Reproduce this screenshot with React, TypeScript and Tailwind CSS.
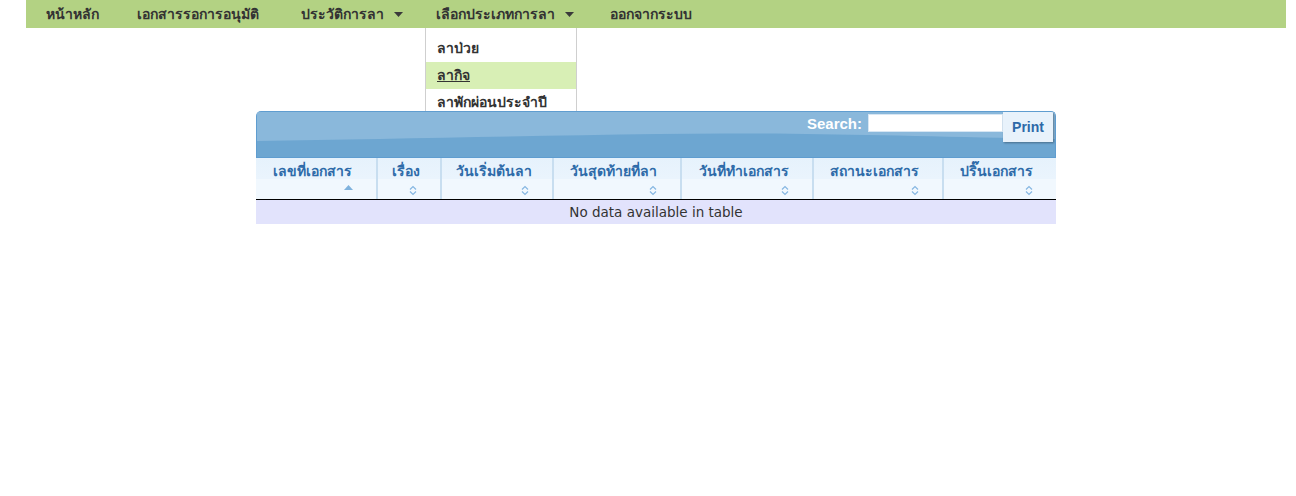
import React from "react"

const navItems = [
  { label: "หน้าหลัก", w: "w-[91px]" },
  { label: "เอกสารรอการอนุมัติ", w: "w-[164px]" },
  { label: "ประวัติการลา", w: "w-[135px]", caret: true },
  { label: "เลือกประเภทการลา", w: "w-[174px]", caret: true, open: true },
  { label: "ออกจากระบบ", w: "w-[120px]" },
]

const leaveTypes = ["ลาป่วย", "ลากิจ", "ลาพักผ่อนประจำปี"]

const columns = [
  { label: "เลขที่เอกสาร", w: "w-[120px]", sorted: true },
  { label: "เรื่อง", w: "w-[64px]" },
  { label: "วันเริ่มต้นลา", w: "w-[112px]" },
  { label: "วันสุดท้ายที่ลา", w: "w-[128px]" },
  { label: "วันที่ทำเอกสาร", w: "w-[132px]" },
  { label: "สถานะเอกสาร", w: "w-[130px]" },
  { label: "ปริ๊นเอกสาร", w: "flex-1" },
]

const Caret = () => (
  <svg width="9" height="5" viewBox="0 0 9 5" className="ml-[10px] mt-[1px]">
    <path d="M0 0h9L4.5 5z" fill="#3a3a3a" />
  </svg>
)

const SortIcon = ({ asc }: { asc?: boolean }) =>
  asc ? (
    <svg width="9" height="5" viewBox="0 0 9 5">
      <path d="M0 5h9L4.5 0z" fill="#7fb2dd" />
    </svg>
  ) : (
    <svg width="8" height="11" viewBox="0 0 8 11">
      <path d="M1 4.5L4 1.5l3 3M1 6.5l3 3 3-3" fill="none" stroke="#86b7e2" strokeWidth="1.2" />
    </svg>
  )

const LeaveList = () => {
  return (
    <div className="min-h-[496px] bg-white font-['Tahoma','DejaVu_Sans',sans-serif]">
      <div className="relative z-10 ml-[26px] mr-[10px] h-[28px] bg-[#b3d283]">
        <ul className="flex h-full pl-[9px]">
          {navItems.map((item) => (
            <li key={item.label} className={`relative flex h-full items-center px-[11px] ${item.w}`}>
              <span className="whitespace-nowrap text-[14px] font-bold text-[#333]">{item.label}</span>
              {item.caret && <Caret />}
              {item.open && (
                <div className="absolute left-0 top-[28px] w-[152px] border border-t-0 border-[#cfcfcf] bg-white pt-[7px]">
                  {leaveTypes.map((t, i) => (
                    <div
                      key={t}
                      className={`flex h-[27px] items-center px-[11px] text-[14px] font-bold text-[#333] ${
                        i === 1 ? "bg-[#d8efb5] underline" : ""
                      }`}
                    >
                      {t}
                    </div>
                  ))}
                </div>
              )}
            </li>
          ))}
        </ul>
      </div>

      <div className="relative z-20 ml-[256px] mt-[83px] w-[800px]">
        <div className="relative h-[46px] overflow-hidden rounded-t-[5px] border border-b-0 border-[#5f9dd0]">
          <svg className="absolute inset-0" width="800" height="46" preserveAspectRatio="none" viewBox="0 0 800 46">
            <rect width="800" height="46" fill="#6da6d1" />
            <path d="M0 0H800V27C640 24 520 20 400 22C260 24 120 27 0 29Z" fill="#8ab8db" />
          </svg>
          <div className="relative flex items-start justify-end">
            <span className="mt-[1px] text-[15px] font-bold text-white font-['Liberation_Sans',sans-serif]">Search:</span>
            <input className="ml-[6px] mt-[2px] h-[18px] w-[135px] border border-[#d7e6f3] bg-white" />
            <button className="h-[30px] w-[50px] bg-[#e8f2fb] text-[14px] font-bold text-[#2d69a8] shadow-[1px_1px_2px_rgba(0,0,0,0.35)] font-['Liberation_Sans',sans-serif]">
              Print
            </button>
            <div className="w-[2px]" />
          </div>
        </div>

        <div className="flex h-[43px] border-b border-t border-black border-t-[#5f9dd0] bg-[linear-gradient(#e6f2fc_0%,#eaf4fd_50%,#f1f8fe_50%,#f1f8fe_100%)]">
          {columns.map((c, i) => (
            <div
              key={c.label}
              className={`flex flex-col pt-[3px] ${c.w} ${i > 0 ? "border-l-2 border-[#c8def0]" : ""}`}
            >
              <span className="pr-[7px] text-center text-[14px] font-bold text-[#2e6ba9]">{c.label}</span>
              <div className="mt-[3px] flex justify-end pr-[23px]">
                <SortIcon asc={c.sorted} />
              </div>
            </div>
          ))}
        </div>

        <div className="flex h-[24px] items-center justify-center bg-[#e2e3fc] text-[13.5px] text-[#333] font-['DejaVu_Sans',sans-serif]">
          No data available in table
        </div>
      </div>
    </div>
  )
}

export default LeaveList
